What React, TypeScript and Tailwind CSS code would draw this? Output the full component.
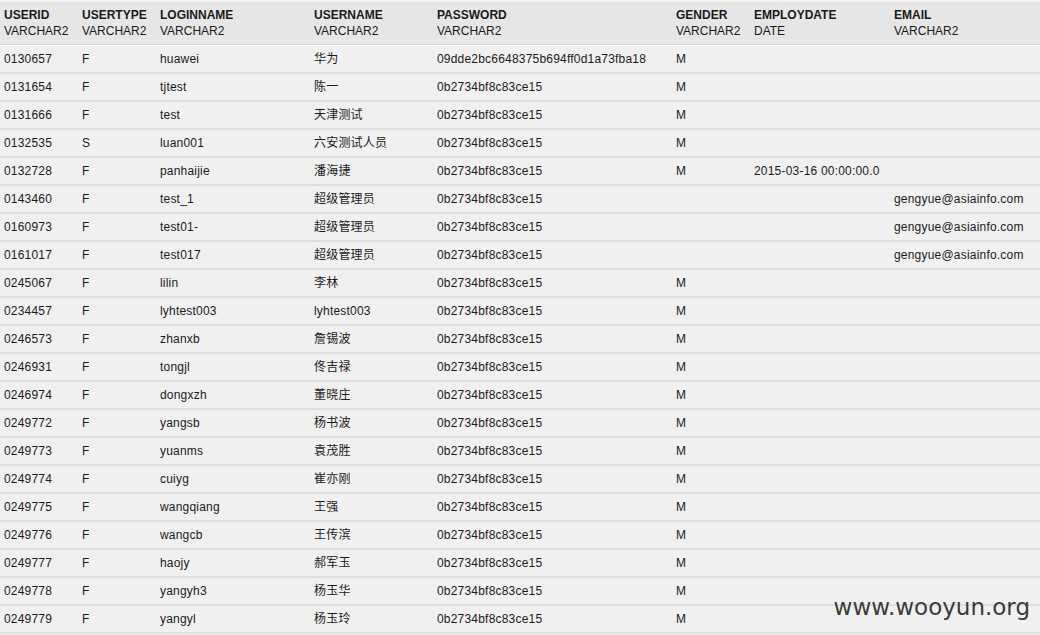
const rows: string[][] = [
  ["0130657", "F", "huawei", "华为", "09dde2bc6648375b694ff0d1a73fba18", "M", "", ""],
  ["0131654", "F", "tjtest", "陈一", "0b2734bf8c83ce15", "M", "", ""],
  ["0131666", "F", "test", "天津测试", "0b2734bf8c83ce15", "M", "", ""],
  ["0132535", "S", "luan001", "六安测试人员", "0b2734bf8c83ce15", "M", "", ""],
  ["0132728", "F", "panhaijie", "潘海捷", "0b2734bf8c83ce15", "M", "2015-03-16 00:00:00.0", ""],
  ["0143460", "F", "test_1", "超级管理员", "0b2734bf8c83ce15", "", "", "gengyue@asiainfo.com"],
  ["0160973", "F", "test01-", "超级管理员", "0b2734bf8c83ce15", "", "", "gengyue@asiainfo.com"],
  ["0161017", "F", "test017", "超级管理员", "0b2734bf8c83ce15", "", "", "gengyue@asiainfo.com"],
  ["0245067", "F", "lilin", "李林", "0b2734bf8c83ce15", "M", "", ""],
  ["0234457", "F", "lyhtest003", "lyhtest003", "0b2734bf8c83ce15", "M", "", ""],
  ["0246573", "F", "zhanxb", "詹锡波", "0b2734bf8c83ce15", "M", "", ""],
  ["0246931", "F", "tongjl", "佟吉禄", "0b2734bf8c83ce15", "M", "", ""],
  ["0246974", "F", "dongxzh", "董晓庄", "0b2734bf8c83ce15", "M", "", ""],
  ["0249772", "F", "yangsb", "杨书波", "0b2734bf8c83ce15", "M", "", ""],
  ["0249773", "F", "yuanms", "袁茂胜", "0b2734bf8c83ce15", "M", "", ""],
  ["0249774", "F", "cuiyg", "崔亦刚", "0b2734bf8c83ce15", "M", "", ""],
  ["0249775", "F", "wangqiang", "王强", "0b2734bf8c83ce15", "M", "", ""],
  ["0249776", "F", "wangcb", "王传滨", "0b2734bf8c83ce15", "M", "", ""],
  ["0249777", "F", "haojy", "郝军玉", "0b2734bf8c83ce15", "M", "", ""],
  ["0249778", "F", "yangyh3", "杨玉华", "0b2734bf8c83ce15", "M", "", ""],
  ["0249779", "F", "yangyl", "杨玉玲", "0b2734bf8c83ce15", "M", "", ""],
];

const columns = [
  ["USERID", "VARCHAR2"],
  ["USERTYPE", "VARCHAR2"],
  ["LOGINNAME", "VARCHAR2"],
  ["USERNAME", "VARCHAR2"],
  ["PASSWORD", "VARCHAR2"],
  ["GENDER", "VARCHAR2"],
  ["EMPLOYDATE", "DATE"],
  ["EMAIL", "VARCHAR2"],
];

const grid = "grid grid-cols-[78px_78px_154px_123px_239px_78px_140px_1fr]";

export default function App() {
  return (
    <div
      className="relative w-[1040px] h-[635px] overflow-hidden bg-[#f0f0f0] text-[12px] text-[#1a1a1a]"
      style={{ fontFamily: '"Liberation Sans", Arial, "Noto Sans CJK SC", sans-serif' }}
    >
      <div className="border-t-2 border-[#f2f2f2]">
        {/* header */}
        <div className={`${grid} h-[43px] bg-[#e6e6e6] border-b border-[#d4d4d4] pt-[5px] leading-[16px]`}>
          {columns.map(([name, type]) => (
            <div key={name} className="pl-[4px]">
              <div className="font-bold">{name}</div>
              <div>{type}</div>
            </div>
          ))}
        </div>
        <div className="h-px bg-white" />

        {/* rows */}
        {rows.map((r) => (
          <div key={r[0]} className="border-b-2 border-[#dedede]">
            <div className={`${grid} h-[26px] items-center tracking-[0.2px]`}>
              {r.map((cell, i) => (
                <div key={i} className="pl-[4px] whitespace-nowrap">
                  {cell}
                </div>
              ))}
            </div>
          </div>
        ))}
      </div>

      {/* watermark */}
      <div
        className="absolute right-[10px] top-[592px] text-[23px] leading-[30px] text-[#3a3a3a]"
        style={{ fontFamily: '"DejaVu Sans", Verdana, sans-serif' }}
      >
        www.wooyun.org
      </div>
    </div>
  );
}
